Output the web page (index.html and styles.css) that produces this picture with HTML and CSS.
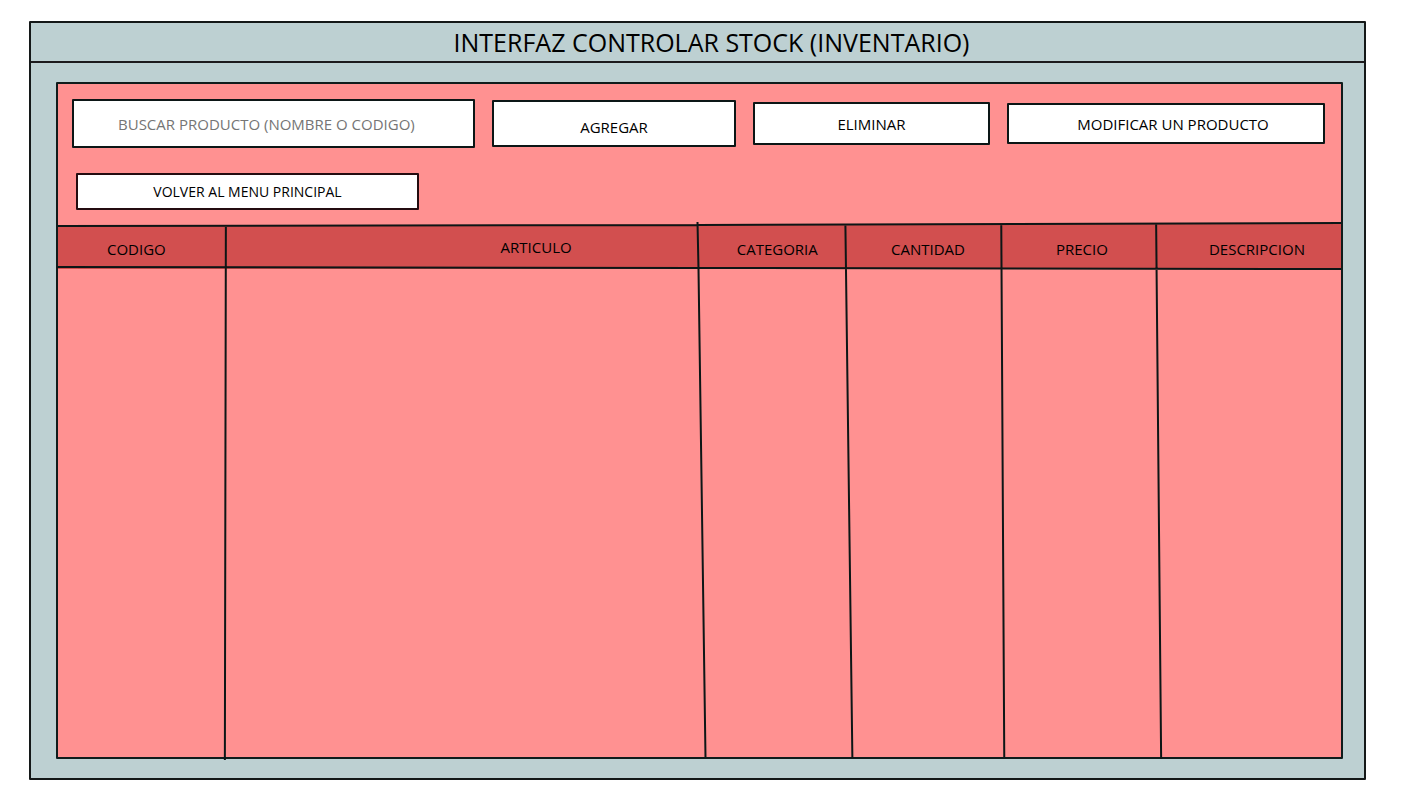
FILE: index.html
```html
<!DOCTYPE html>
<html lang="es">
<head>
<meta charset="utf-8">
<meta name="viewport" content="width=device-width, initial-scale=1">
<title>Controlar stock</title>
<link rel="stylesheet" href="styles.css">
</head>
<body>
<main class="window">
  <h1 class="window-title">INTERFAZ CONTROLAR STOCK (INVENTARIO)</h1>
  <section class="panel">
    <div class="toolbar">
      <input class="box search" type="search" aria-label="Buscar producto" placeholder="BUSCAR PRODUCTO (NOMBRE O CODIGO)">
      <button class="box add" type="button">AGREGAR</button>
      <button class="box remove" type="button">ELIMINAR</button>
      <button class="box edit" type="button">MODIFICAR UN PRODUCTO</button>
    </div>
    <div class="nav">
      <button class="box back" type="button">VOLVER AL MENU PRINCIPAL</button>
    </div>
    <div class="stock">
      <table class="stock-table">
        <colgroup>
          <col class="col-code"><col class="col-item"><col class="col-category">
          <col class="col-amount"><col class="col-price"><col class="col-description">
        </colgroup>
        <thead>
          <tr>
            <th class="code" scope="col">CODIGO</th>
            <th class="item" scope="col">ARTICULO</th>
            <th scope="col">CATEGORIA</th>
            <th scope="col">CANTIDAD</th>
            <th scope="col">PRECIO</th>
            <th class="description" scope="col">DESCRIPCION</th>
          </tr>
        </thead>
        <tbody>
          <tr><td></td><td></td><td></td><td></td><td></td><td></td></tr>
        </tbody>
      </table>
      <!-- Hand-drawn column rules, slightly slanted -->
      <svg class="rules" viewBox="0 0 1284 532" preserveAspectRatio="none" aria-hidden="true">
        <path class="above" d="M0 0V1L1284 -2V0Z"/>
        <path d="M0 1L640 0L1284 -2M-1 42L640 43L1284 44M168 1L167 535M640 -3L641 44L648 532M788 -1L795 533M944 -1L947 532M1099 -1L1104 534"/>
      </svg>
    </div>
  </section>
</main>
</body>
</html>
```
FILE: styles.css
```css
* {
  box-sizing: border-box;
}

body {
  margin: 0;
  min-height: 100vh;
  padding: 21px 35px 28px 29px;
  display: flex;
  background: #fff;
  color: #000;
  font-family: "Open Sans", "Noto Sans", sans-serif;
  font-size: 15px;
}

.window {
  flex: 1;
  display: flex;
  flex-direction: column;
  border: 2px solid #141818;
  border-radius: 1px;
  background: #bdd0d2;
}

.window-title {
  margin: 0;
  padding-left: 28px;
  border-bottom: 2px solid #1c1a1c;
  font-size: 25px;
  font-weight: 400;
  line-height: 38px;
  text-align: center;
}

.panel {
  flex: 1;
  display: flex;
  flex-direction: column;
  margin: 19px 21px 19px 25px;
  border: 2px solid #101c1c;
  border-radius: 1px;
  background: #ff9191;
}

.toolbar {
  display: grid;
  grid-template-columns: 403fr 244fr 237fr 318fr;
  align-items: center;
  gap: 17px;
  padding: 15px 16px 0 14px;
}

.box {
  min-width: 0;
  margin: 0;
  padding: 0;
  border: 2px solid #0c1616;
  border-radius: 1px;
  background: #fff;
  color: #000;
  font: inherit;
  line-height: 20px;
}

.search {
  height: 49px;
  padding-left: 44px;
  appearance: none;
}

.search::placeholder {
  color: #757575;
  opacity: 1;
}

.add {
  height: 47px;
  padding-top: 6px;
}

.remove {
  height: 43px;
}

.edit {
  height: 41px;
  padding-left: 14px;
}

.nav {
  padding: 25px 18px 15px;
}

.back {
  width: 343px;
  max-width: 100%;
  height: 37px;
  border-color: #240c10;
  font-size: 14px;
}

.stock {
  position: relative;
  flex: 1;
  display: flex;
}

.stock-table {
  width: 100%;
  table-layout: fixed;
  border-collapse: collapse;
}

.stock-table th {
  height: 44px;
  padding: 4px 0 0 8px;
  background: #d24f4f;
  font-weight: 400;
  line-height: 20px;
}

.stock-table .code {
  padding: 4px 10px 0 0;
}

.stock-table .item {
  padding: 0 0 0 148px;
}

.stock-table .description {
  padding-left: 18px;
}

.col-code { width: 13%; }
.col-item { width: 37%; }
.col-category { width: 11.5%; }
.col-amount { width: 12%; }
.col-price { width: 12%; }

.rules {
  position: absolute;
  inset: 0;
  width: 100%;
  height: 100%;
  overflow: visible;
  pointer-events: none;
}

.rules path {
  fill: none;
  stroke: #0c1616;
  stroke-width: 2px;
  vector-effect: non-scaling-stroke;
}

.rules .above {
  fill: #d24f4f;
  stroke: none;
}
```
